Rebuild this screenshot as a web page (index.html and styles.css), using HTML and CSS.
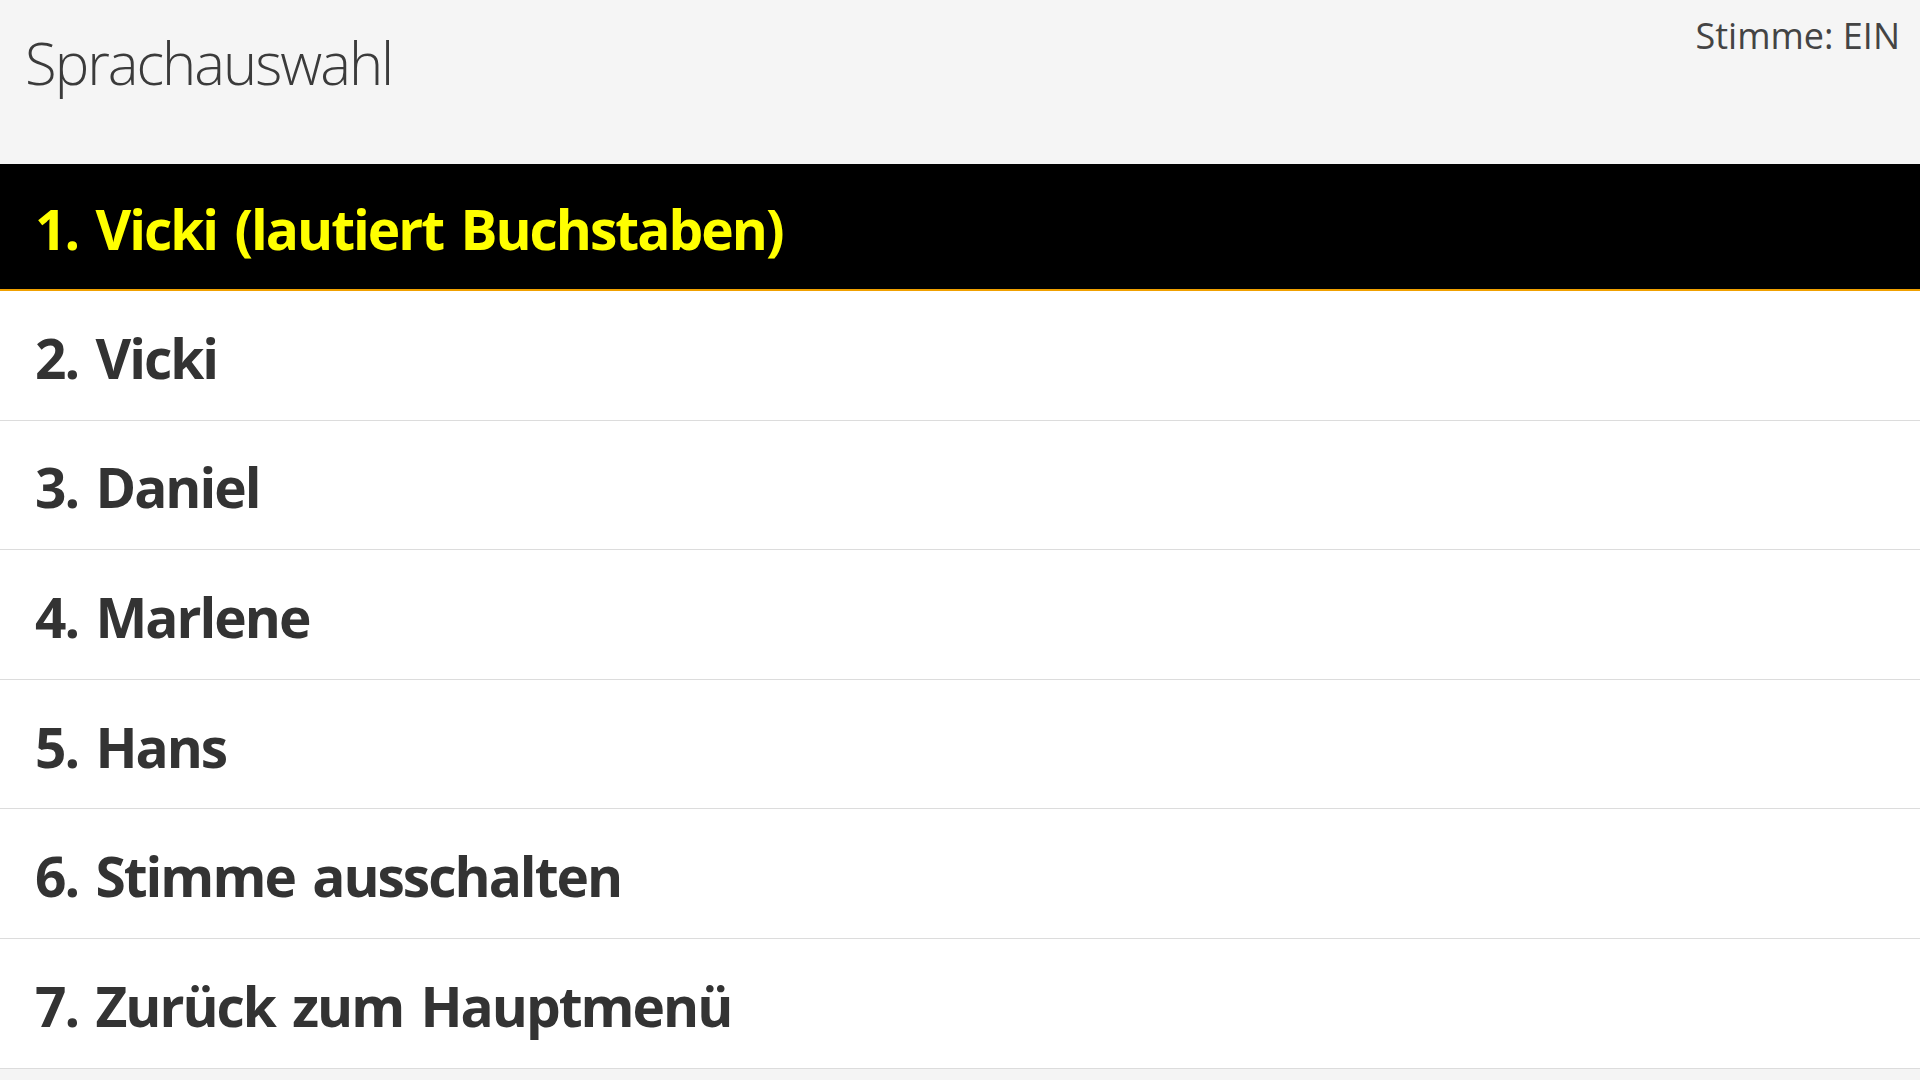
FILE: index.html
```html
<!DOCTYPE html>
<html lang="de">
<head>
<meta charset="utf-8">
<title>Sprachauswahl</title>
<link rel="stylesheet" href="styles.css">
</head>
<body>
<header class="header">
  <h1 class="title">Sprachauswahl</h1>
  <div class="status">Stimme: EIN</div>
</header>
<ul class="menu">
  <li class="item item-selected">1. Vicki (lautiert Buchstaben)</li>
  <li class="item">2. Vicki</li>
  <li class="item">3. Daniel</li>
  <li class="item">4. Marlene</li>
  <li class="item">5. Hans</li>
  <li class="item">6. Stimme ausschalten</li>
  <li class="item">7. Zurück zum Hauptmenü</li>
</ul>
</body>
</html>
```
FILE: styles.css
```css
html, body {
  margin: 0;
  padding: 0;
}
body {
  background: #f4f4f4;
  font-family: "Open Sans", "Noto Sans", "Liberation Sans", sans-serif;
  width: 1920px;
  height: 1080px;
  overflow: hidden;
}
.header {
  height: 164px;
  box-sizing: border-box;
  background: #f5f5f5;
  display: flex;
  justify-content: space-between;
  align-items: flex-start;
  padding: 0 20px 0 25px;
}
.title {
  margin: 0;
  padding-top: 27px;
  font-size: 58px;
  font-weight: 300;
  line-height: 72px;
  letter-spacing: -2px;
  color: #3b3b3b;
}
.status {
  padding-top: 12px;
  font-size: 36px;
  font-weight: 400;
  line-height: 48px;
  color: #444444;
}
.menu {
  list-style: none;
  margin: 0;
  padding: 0;
}
.item {
  box-sizing: border-box;
  height: 129.6px;
  display: flex;
  align-items: center;
  padding: 4px 0 0 35px;
  background: #ffffff;
  border-bottom: 1px solid #dcdcdc;
  color: #333333;
  font-size: 55px;
  font-weight: 700;
  letter-spacing: -2px;
  word-spacing: 5px;
}
.item-selected {
  height: 127px;
  background: #000000;
  color: #ffff00;
  border-bottom: 2px solid #f0a000;
}
```
